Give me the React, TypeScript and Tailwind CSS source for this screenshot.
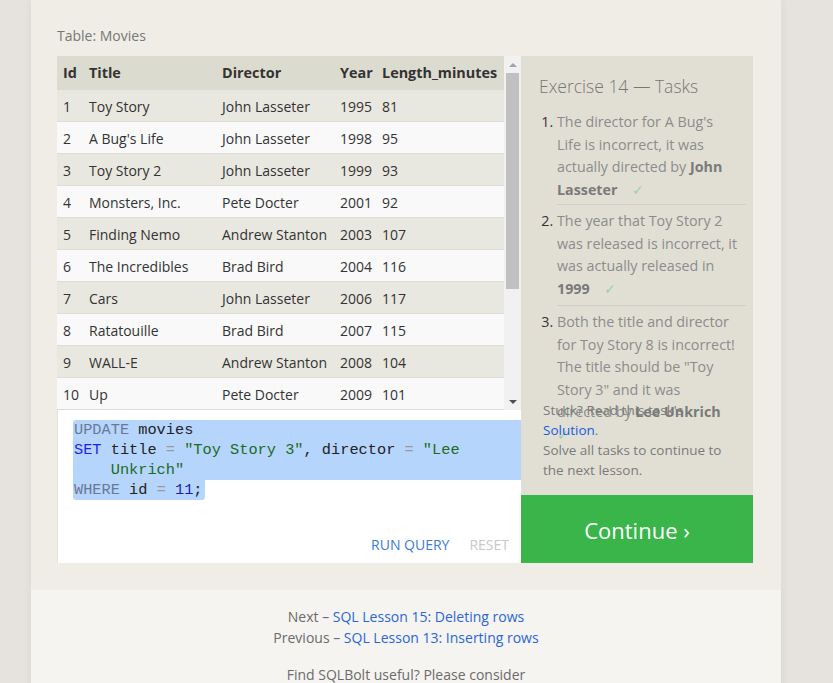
const movies: [number, string, string, number, number][] = [
  [1, "Toy Story", "John Lasseter", 1995, 81],
  [2, "A Bug's Life", "John Lasseter", 1998, 95],
  [3, "Toy Story 2", "John Lasseter", 1999, 93],
  [4, "Monsters, Inc.", "Pete Docter", 2001, 92],
  [5, "Finding Nemo", "Andrew Stanton", 2003, 107],
  [6, "The Incredibles", "Brad Bird", 2004, 116],
  [7, "Cars", "John Lasseter", 2006, 117],
  [8, "Ratatouille", "Brad Bird", 2007, 115],
  [9, "WALL-E", "Andrew Stanton", 2008, 104],
  [10, "Up", "Pete Docter", 2009, 101],
]

const cols = "grid grid-cols-[26px_133px_118px_42px_1fr] items-center pl-[6px]"

function Check() {
  return <span className="ml-[14px] font-normal text-[#9ad3a3]">✓</span>
}

function MoviesTable() {
  return (
    <div className="flex h-[354px] bg-[#f1f1f1]">
      <div className="w-[447px] text-[14px] text-[#333]">
        {/* Header */}
        <div className={`${cols} h-[34px] bg-[#dcdbcf] text-[14.4px] font-bold`}>
          <span>Id</span>
          <span>Title</span>
          <span>Director</span>
          <span>Year</span>
          <span>Length_minutes</span>
        </div>
        {movies.map((m, i) => (
          <div
            key={m[0]}
            className={`${cols} h-[32px] border-b border-[#dedcd4] pt-[1px] ${i % 2 === 0 ? "bg-[#e9e8e0]" : "bg-[#f9f9f9]"}`}
          >
            {m.map((c, j) => (
              <span key={j}>{c}</span>
            ))}
          </div>
        ))}
      </div>

      {/* Scrollbar */}
      <div className="flex w-[17px] flex-col bg-[#f1f1f1]">
        <div className="flex h-[17px] items-center justify-center">
          <div className="h-0 w-0 border-x-[4px] border-b-[4px] border-x-transparent border-b-[#a3a3a3]" />
        </div>
        <div className="mx-[2px] h-[216px] bg-[#c1c1c1]" />
        <div className="flex-1" />
        <div className="flex h-[17px] items-center justify-center">
          <div className="h-0 w-0 border-x-[4px] border-t-[4px] border-x-transparent border-t-[#505050]" />
        </div>
      </div>
    </div>
  )
}

function Editor() {
  const eq = <span className="text-[#999]"> = </span>
  return (
    <div className="flex h-[153px] flex-col border-l border-[#e4e2da] bg-white">
      <div className="pl-[15px] pt-[10px] font-['Liberation_Mono',monospace] text-[15.3px] leading-[20px] text-[#222]">
        <div className="rounded-tl-[3px] bg-[#b5d5fd] pl-[1px]">
          <div>
            <span className="text-[#6a7896]">UPDATE</span> movies
          </div>
          <div className="whitespace-pre">
            <span className="text-[#1f1ff5]">SET</span> title{eq}
            <span className="text-[#1d6b1d]">"Toy Story 3"</span>, director{eq}
            <span className="text-[#1d6b1d]">"Lee</span>
          </div>
          <div className="pl-[4ch] text-[#1d6b1d]">Unkrich"</div>
        </div>
        <div className="inline-block rounded-b-[3px] bg-[#b5d5fd] pl-[1px] pr-[2px]">
          <span className="text-[#6a7896]">WHERE</span> id{eq}
          <span className="text-[#1c1ca8]">11</span>;
        </div>
      </div>
      <div className="mt-auto flex justify-end gap-[20px] pb-[8px] pr-[12px] text-[14px] leading-[20px]">
        <span className="text-[#3a7cd8]">RUN QUERY</span>
        <span className="text-[#c8c8c8]">RESET</span>
      </div>
    </div>
  )
}

function Tasks() {
  return (
    <div className="flex w-[232px] flex-col">
      <div className="relative flex-1 bg-[#e1dfd4] pl-[18px] pr-[7px] pt-[18px]">
        <h3 className="text-[17.5px] font-light leading-[24px] text-[#777]">Exercise 14 — Tasks</h3>
        <ol className="mt-[9px] list-decimal pl-[18px] text-[14.3px] leading-[22.5px] text-[#8c8c8c] marker:text-[#333]">
          <li className="whitespace-nowrap border-b border-[#d1cfc5] pb-[3px] pt-[4px]">
            The director for A Bug's
            <br />
            Life is incorrect, it was
            <br />
            actually directed by <b className="text-[#7a7a7a]">John</b>
            <br />
            <b className="text-[#7a7a7a]">Lasseter</b>
            <Check />
          </li>
          <li className="whitespace-nowrap border-b border-[#d1cfc5] py-[5px]">
            The year that Toy Story 2
            <br />
            was released is incorrect, it
            <br />
            was actually released in
            <br />
            <b className="text-[#7a7a7a]">1999</b>
            <Check />
          </li>
          <li className="whitespace-nowrap pt-[5px]">
            Both the title and director
            <br />
            for Toy Story 8 is incorrect!
            <br />
            The title should be "Toy
            <br />
            Story 3" and it was
            <br />
            directed by <b className="text-[#7a7a7a]">Lee Unkrich</b>
            <br />
            <span className="-ml-[14px]">
              <Check />
            </span>
          </li>
        </ol>

        {/* Help text pinned to the panel bottom */}
        <div className="absolute bottom-[15px] left-[22px] text-[13.5px] leading-[20px] text-[#7a7a7a]">
          Stuck? Read this task's
          <br />
          <span className="text-[#1a5ae0]">Solution</span>.
          <br />
          Solve all tasks to continue to
          <br />
          the next lesson.
        </div>
      </div>
      <div className="flex h-[68px] items-center justify-center bg-[#39b54a] pt-[3px] text-[22px] text-white">
        Continue ›
      </div>
    </div>
  )
}

export default function App() {
  return (
    <div className="min-h-screen bg-[#e6e3de] font-['Open_Sans',sans-serif]">
      <div className="ml-[31px] w-[750px] shadow-[0_0_10px_rgba(0,0,0,0.05)]">
        <div className="bg-[#f0ede6] pb-[27px] pl-[26px] pr-[28px] pt-[25px]">
          <div className="pt-[1px] text-[14px] leading-[20px] text-[#777]">Table: Movies</div>
          <div className="mt-[10px] flex">
            <div className="w-[464px]">
              <MoviesTable />
              <Editor />
            </div>
            <Tasks />
          </div>
        </div>

        {/* Lesson navigation */}
        <div className="bg-[#f5f4f0] pb-[10px] pt-[16px] text-center text-[14px] leading-[21px] text-[#6b6b6b]">
          <p>
            Next – <span className="text-[#2a66d8]">SQL Lesson 15: Deleting rows</span>
          </p>
          <p>
            Previous – <span className="text-[#2a66d8]">SQL Lesson 13: Inserting rows</span>
          </p>
          <p className="mt-[16px]">Find SQLBolt useful? Please consider</p>
        </div>
      </div>
    </div>
  )
}
